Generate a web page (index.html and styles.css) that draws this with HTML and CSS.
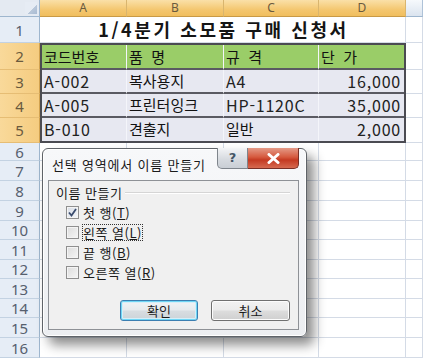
FILE: index.html
```html
<!DOCTYPE html>
<html lang="ko">
<head>
<meta charset="utf-8">
<link rel="stylesheet" href="styles.css">
</head>
<body>
<div class="sheet">
  <div class="corner"></div>
  <div class="ch sel">A</div>
  <div class="ch sel">B</div>
  <div class="ch sel">C</div>
  <div class="ch sel">D</div>
  <div class="ch"></div>

  <div class="rh">1</div>
  <div class="title">1/4분기 소모품 구매 신청서</div>
  <div class="cell"></div>

  <div class="rh sel">2</div>
  <div class="table">
    <div class="tc head">코드번호</div>
    <div class="tc head">품&nbsp;&nbsp;명</div>
    <div class="tc head">규&nbsp;&nbsp;격</div>
    <div class="tc head last">단&nbsp;&nbsp;가</div>
    <div class="tc lat">A-002</div>
    <div class="tc">복사용지</div>
    <div class="tc lat">A4</div>
    <div class="tc lat num last">16,000</div>
    <div class="tc lat">A-005</div>
    <div class="tc">프린터잉크</div>
    <div class="tc lat">HP-1120C</div>
    <div class="tc lat num last">35,000</div>
    <div class="tc lat bottom">B-010</div>
    <div class="tc bottom">견출지</div>
    <div class="tc bottom">일반</div>
    <div class="tc lat num bottom last">2,000</div>
  </div>
  <div class="cell"></div>
  <div class="rh sel">3</div><div class="cell"></div>
  <div class="rh sel">4</div><div class="cell"></div>
  <div class="rh sel">5</div><div class="cell"></div>

  <div class="rh">6</div><div class="cell"></div><div class="cell"></div><div class="cell"></div><div class="cell"></div><div class="cell"></div>
  <div class="rh">7</div><div class="cell"></div><div class="cell"></div><div class="cell"></div><div class="cell"></div><div class="cell"></div>
  <div class="rh">8</div><div class="cell"></div><div class="cell"></div><div class="cell"></div><div class="cell"></div><div class="cell"></div>
  <div class="rh">9</div><div class="cell"></div><div class="cell"></div><div class="cell"></div><div class="cell"></div><div class="cell"></div>
  <div class="rh">10</div><div class="cell"></div><div class="cell"></div><div class="cell"></div><div class="cell"></div><div class="cell"></div>
  <div class="rh">11</div><div class="cell"></div><div class="cell"></div><div class="cell"></div><div class="cell"></div><div class="cell"></div>
  <div class="rh">12</div><div class="cell"></div><div class="cell"></div><div class="cell"></div><div class="cell"></div><div class="cell"></div>
  <div class="rh">13</div><div class="cell"></div><div class="cell"></div><div class="cell"></div><div class="cell"></div><div class="cell"></div>
  <div class="rh">14</div><div class="cell"></div><div class="cell"></div><div class="cell"></div><div class="cell"></div><div class="cell"></div>
  <div class="rh">15</div><div class="cell"></div><div class="cell"></div><div class="cell"></div><div class="cell"></div><div class="cell"></div>
  <div class="rh">16</div><div class="cell"></div><div class="cell"></div><div class="cell"></div><div class="cell"></div><div class="cell"></div>
</div>

<div class="dialog">
  <div class="titlebar">
    <span class="dtitle">선택 영역에서 이름 만들기</span>
    <div class="capbtns">
      <div class="help">?</div>
      <div class="close">
        <svg width="13" height="11" viewBox="0 0 13 11"><path d="M2 1.5 L11 9.5 M11 1.5 L2 9.5" stroke="#fff" stroke-width="3" stroke-linecap="round" fill="none"/></svg>
      </div>
    </div>
  </div>
  <div class="client">
    <div class="group"><span class="glabel">이름 만들기</span><span class="gline"></span></div>
    <div class="opts">
      <div class="chk"><span class="box checked"><svg width="9" height="9" viewBox="0 0 9 9"><path d="M1 4.5 L3.5 7.5 L8 1" stroke="#3a4c6e" stroke-width="1.8" fill="none"/></svg></span><span>첫 행(<u>T</u>)</span></div>
      <div class="chk"><span class="box"></span><span class="focus">왼쪽 열(<u>L</u>)</span></div>
      <div class="chk"><span class="box"></span><span>끝 행(<u>B</u>)</span></div>
      <div class="chk"><span class="box"></span><span>오른쪽 열(<u>R</u>)</span></div>
    </div>
    <div class="buttons">
      <div class="btn default">확인</div>
      <div class="btn">취소</div>
    </div>
  </div>
</div>
</body>
</html>
```

FILE: styles.css
```css
* { box-sizing: border-box; }

body {
  margin: 0;
  width: 423px;
  height: 359px;
  overflow: hidden;
  position: relative;
  background: #fff;
  font-family: "Noto Sans CJK KR", "Noto Sans", sans-serif;
  color: #111;
}

.sheet {
  display: grid;
  grid-template-columns: 40px 87px 97px 95px 87px 17px;
  grid-template-rows: 17px 26px 27px 24px 24px 25px 18px 20px 20px 20px 19px 20px 19px 20px 19px 20px 20px;
}

.corner {
  background: linear-gradient(135deg, #e6ecf4 0%, #e6ecf4 62%, #b9c8da 62%, #a9bbd2 100%);
  background-size: 12px 12px;
  background-position: right 2px bottom 2px;
  background-repeat: no-repeat;
  background-color: #e4eaf2;
  border-right: 1px solid #9eb6ce;
  border-bottom: 1px solid #9eb6ce;
}

.ch {
  background: linear-gradient(#f6f9fc, #dbe4ef);
  border-right: 1px solid #aec2d8;
  border-bottom: 1px solid #9eb6ce;
  font-family: "Noto Sans", sans-serif;
  font-size: 12px;
  line-height: 16px;
  text-align: center;
  color: #55524a;
}

.ch.sel {
  background: linear-gradient(#fae0a8, #f4c770 60%, #f1be5e);
  border-right: 1px solid #d9b56e;
  border-bottom: 1px solid #c99a46;
  color: #6a5a3e;
}

.rh {
  background: #e6edf6;
  border-right: 1px solid #9eb6ce;
  border-bottom: 1px solid #c3d2e2;
  font-family: "Noto Sans", sans-serif;
  font-size: 15px;
  line-height: 18px;
  color: #56606e;
  display: flex;
  align-items: center;
  justify-content: center;
}

.rh.sel {
  background: linear-gradient(90deg, #f9d99a, #f5cc80);
  border-right: 1px solid #d2a24f;
  border-bottom: 1px solid #e6bd74;
  color: #6a5a3e;
}

.cell {
  border-right: 1px solid #d4dbe6;
  border-bottom: 1px solid #d4dbe6;
}

.title {
  grid-column: 2 / 6;
  border-bottom: 1px solid #d4dbe6;
  border-right: 1px solid #d4dbe6;
  font-size: 18px;
  font-weight: 700;
  letter-spacing: 2.6px;
  text-align: center;
  line-height: 25px;
  color: #151515;
  padding-left: 2px;
}

.table {
  grid-column: 2 / 6;
  grid-row: 3 / 7;
  border: 2px solid #4b4b52;
  display: grid;
  grid-template-columns: 85px 97px 95px 85px;
  grid-template-rows: 25px 24px 24px 23px;
  background: #e7e8f1;
}

.tc {
  border-right: 1px solid #f4f5fa;
  border-bottom: 2px solid #5a5a62;
  font-size: 15px;
  line-height: 20px;
  padding: 1px 2px 0 2px;
  color: #111;
  white-space: nowrap;
  overflow: hidden;
}

.tc.head {
  background: #9acd68;
  line-height: 22px;
}

.tc.lat { letter-spacing: 0.8px; font-size: 16px; color: #222; }
.tc.num { text-align: right; padding-right: 3px; }
.tc.last { border-right: none; }
.tc.bottom { border-bottom: none; }

/* Dialog */
.dialog {
  position: absolute;
  left: 42px;
  top: 148px;
  width: 265px;
  height: 189px;
  border: 1px solid #5f6368;
  border-radius: 6px;
  background: linear-gradient(#f7f8fa, #eceef1);
  box-shadow: 7px 8px 12px rgba(0, 0, 0, 0.45), inset 0 0 0 1px #ffffff;
  padding: 0 7px 6px 5px;
  display: flex;
  flex-direction: column;
}

.titlebar {
  height: 31px;
  display: flex;
  align-items: flex-start;
  justify-content: space-between;
}

.dtitle {
  font-size: 13px;
  line-height: 16px;
  margin-top: 8px;
  margin-left: 4px;
  color: #1b1b1b;
  letter-spacing: 0.8px;
}

.capbtns {
  display: flex;
  margin-top: -1px;
}

.help {
  width: 31px;
  height: 21px;
  border: 1px solid #7f858c;
  border-top: none;
  border-radius: 0 0 0 5px;
  background: linear-gradient(#f3f4f6, #d7dbe0 55%, #c9ced5);
  font-family: "DejaVu Sans", sans-serif;
  font-weight: 700;
  font-size: 13px;
  color: #445566;
  text-align: center;
  line-height: 19px;
}

.close {
  width: 51px;
  height: 21px;
  border: 1px solid #7a2f25;
  border-left: none;
  border-top: none;
  border-radius: 0 0 5px 0;
  background: linear-gradient(#e49a87, #d65a3f 45%, #c43a22 60%, #d66a50);
  display: flex;
  align-items: center;
  justify-content: center;
}

.client {
  flex: 1;
  background: #f0f0f0;
  border: 1px solid #8e9196;
  display: flex;
  flex-direction: column;
}

.group {
  display: flex;
  align-items: center;
  margin-top: 3px;
  padding-left: 7px;
  padding-right: 8px;
  height: 17px;
}

.glabel {
  font-size: 13px;
  line-height: 17px;
  color: #1b1b1b;
  letter-spacing: 0.5px;
  margin-right: 3px;
}

.gline {
  flex: 1;
  height: 2px;
  border-top: 1px solid #d5d5d5;
  border-bottom: 1px solid #ffffff;
}

.opts {
  display: flex;
  flex-direction: column;
  margin-top: 5px;
  padding-left: 17px;
  gap: 7px;
}

.chk {
  display: flex;
  align-items: center;
  height: 13px;
  font-size: 13px;
  color: #1b1b1b;
  letter-spacing: 0.5px;
}

.chk u { text-decoration: underline; text-underline-offset: 1px; }

.box {
  width: 13px;
  height: 13px;
  border: 1px solid #8f8f8f;
  background: linear-gradient(135deg, #dcdcdc, #f6f6f6);
  box-shadow: inset 0 0 0 1px #f4f4f4;
  margin-right: 4px;
  display: flex;
  align-items: center;
  justify-content: center;
  flex: none;
}

.box.checked { background: linear-gradient(135deg, #d8dde6, #f4f6f9); }

.focus {
  outline: 1px dotted #333;
  outline-offset: 0px;
  line-height: 15px;
}

.buttons {
  display: flex;
  margin-top: auto;
  margin-bottom: 8px;
  padding-left: 71px;
  gap: 13px;
}

.btn {
  width: 79px;
  height: 21px;
  border: 1px solid #707070;
  border-radius: 3px;
  background: linear-gradient(#f2f2f2 0%, #ebebeb 48%, #dddddd 52%, #cfcfcf 100%);
  box-shadow: inset 0 0 0 1px #fcfcfc;
  font-size: 13px;
  line-height: 19px;
  text-align: center;
  color: #1b1b1b;
}

.btn.default {
  width: 78px;
  border-color: #3c7fb1;
  box-shadow: inset 0 0 0 1px #6fd6f5, inset 0 0 0 2px #d6eef8;
  background: linear-gradient(#f1f4f6 0%, #e6eaed 48%, #d8dde1 52%, #ccd3d8 100%);
}
```
